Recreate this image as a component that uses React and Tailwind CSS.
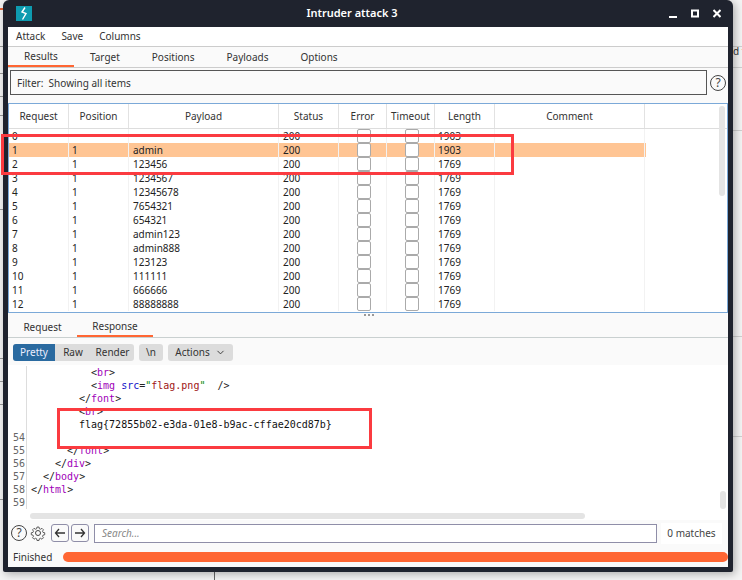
import { ChevronDown } from 'lucide-react';

const mono = "font-['DejaVu_Sans_Mono',monospace] text-[10px] leading-[13px]";

const columns = [
  { name: 'Request', w: 'w-[60px]' },
  { name: 'Position', w: 'w-[60px]' },
  { name: 'Payload', w: 'w-[150px]' },
  { name: 'Status', w: 'w-[60px]' },
  { name: 'Error', w: 'w-[48px]' },
  { name: 'Timeout', w: 'w-[48px]' },
  { name: 'Length', w: 'w-[60px]' },
  { name: 'Comment', w: 'w-[150px]' },
];

const rows = [
  ['0', '', '', '200', '1903'],
  ['1', '1', 'admin', '200', '1903'],
  ['2', '1', '123456', '200', '1769'],
  ['3', '1', '1234567', '200', '1769'],
  ['4', '1', '12345678', '200', '1769'],
  ['5', '1', '7654321', '200', '1769'],
  ['6', '1', '654321', '200', '1769'],
  ['7', '1', 'admin123', '200', '1769'],
  ['8', '1', 'admin888', '200', '1769'],
  ['9', '1', '123123', '200', '1769'],
  ['10', '1', '111111', '200', '1769'],
  ['11', '1', '666666', '200', '1769'],
  ['12', '1', '88888888', '200', '1769'],
];

function Tag({ name }) {
  return <><span className="text-[#222]">&lt;</span><span className="text-[#a000b8]">{name}</span><span className="text-[#222]">&gt;</span></>;
}

function CloseTag({ name }) {
  return <><span className="text-[#222]">&lt;/</span><span className="text-[#a000b8]">{name}</span><span className="text-[#222]">&gt;</span></>;
}

const codeLines = [
  { indent: 'pl-[64px]', body: <Tag name="br" /> },
  {
    indent: 'pl-[64px]',
    body: (
      <>
        <span className="text-[#222]">&lt;</span><span className="text-[#a000b8]">img</span>{' '}
        <span className="text-[#1414c8]">src</span><span className="text-[#222]">=</span>
        <span className="text-[#0a8a0a]">"</span><span className="text-[#a01414]">flag.png</span><span className="text-[#0a8a0a]">"</span>
        <span className="text-[#222]">{'  />'}</span>
      </>
    ),
  },
  { indent: 'pl-[52px]', body: <CloseTag name="font" /> },
  { indent: 'pl-[52px]', body: <Tag name="br" /> },
  { indent: 'pl-[52px]', body: <span className="text-[#111]">{'flag{72855b02-e3da-01e8-b9ac-cffae20cd87b}'}</span> },
  { num: '54', indent: 'pl-[40px]', body: null },
  { num: '55', indent: 'pl-[40px]', body: <CloseTag name="font" /> },
  { num: '56', indent: 'pl-[28px]', body: <CloseTag name="div" /> },
  { num: '57', indent: 'pl-[16px]', body: <CloseTag name="body" /> },
  { num: '58', indent: 'pl-[4px]', body: <CloseTag name="html" /> },
  { num: '59', indent: 'pl-[4px]', body: null },
];

// stray lines of the window behind the attack window
const leftLines = ['top-[46px]', 'top-[73px]', 'top-[96px]', 'top-[115px]', 'top-[209px]', 'top-[358px]', 'top-[381px]', 'top-[404px]', 'top-[499px]'];
const rightLines = ['top-[46px]', 'top-[67px]', 'top-[130px]', 'top-[336px]', 'top-[436px]'];

function HelpIcon() {
  return (
    <div className="flex h-4 w-4 shrink-0 items-center justify-center rounded-full border border-[#444] text-[12px] leading-none text-[#444]">?</div>
  );
}

function Checkbox() {
  return (
    <div className="flex w-[48px] justify-center border-r border-[#f2f2f2] pl-[2px]">
      <div className="h-[14px] w-[14px] rounded-[2px] border border-[#aaa] bg-white" />
    </div>
  );
}

function App() {
  return (
    <div className="relative h-[580px] w-[742px] overflow-hidden bg-[#f4f4f4] font-['Noto_Sans',sans-serif] text-[10px] text-[#333]">
      {/* bits of the window behind */}
      <div className="absolute left-0 top-[8px] h-[2px] w-[3px] bg-[#e8663a]" />
      {leftLines.map((t) => (
        <div key={t} className={`absolute left-0 h-px w-[3px] bg-[#9a9a9a] ${t}`} />
      ))}
      {rightLines.map((t) => (
        <div key={t} className={`absolute left-[733px] h-px w-[9px] bg-[#d0d0d0] ${t}`} />
      ))}
      <div className="absolute left-[214px] top-[572px] h-[8px] w-px bg-[#666]" />
      <div className="absolute left-[733px] top-[44px] whitespace-pre text-[#333]">d t</div>

      {/* attack window */}
      <div className="relative ml-[3px] flex h-[572px] w-[730px] flex-col overflow-hidden rounded-t-[6px] rounded-b-[2px] bg-[#1f232e] px-[5px] pb-[5px] shadow-[2px_2px_8px_rgba(0,0,0,0.3)]">
        <div className="relative flex h-[27px] shrink-0 items-center justify-center pr-[32px]">
          <div className="absolute left-[8px] top-[6px] flex h-[15px] w-[16px] items-center justify-center bg-[#0e9bb0]">
            <svg width="10" height="13" viewBox="0 0 10 13" fill="none" stroke="#fff" strokeWidth="1.4">
              <path d="M6 0.5 L3 5 L7 6.5 L3.5 12.5" />
            </svg>
          </div>
          <span className="text-[11px] font-semibold text-white">Intruder attack 3</span>
          <div className="absolute right-[7px] top-[9px] flex items-center gap-[14px]">
            <svg width="8" height="9" viewBox="0 0 8 9"><rect x="0" y="7" width="8" height="2" fill="#fff" /></svg>
            <svg width="8" height="9" viewBox="0 0 8 9" fill="none" stroke="#fff" strokeWidth="2"><rect x="1" y="1.5" width="6" height="6" /></svg>
            <svg width="8" height="9" viewBox="0 0 8 9" fill="none" stroke="#fff" strokeWidth="2"><path d="M0.5 1 L7.5 8 M7.5 1 L0.5 8" /></svg>
          </div>
        </div>

        <div className="flex min-h-0 flex-1 flex-col bg-[#fafafa]">
          {/* menu bar */}
          <div className="flex h-[20px] shrink-0 items-center gap-[16px] border-b border-[#ccc] bg-white pl-[8px]">
            <span>Attack</span>
            <span>Save</span>
            <span>Columns</span>
          </div>

          {/* tabs */}
          <div className="flex h-[21px] shrink-0 border-b border-[#ccc]">
            <div className="flex w-[66px] items-center justify-center border-b-2 border-[#ff6633] pt-[1px]">Results</div>
            <div className="flex items-center px-[16px]">Target</div>
            <div className="flex items-center px-[16px]">Positions</div>
            <div className="flex items-center px-[16px]">Payloads</div>
            <div className="flex items-center px-[16px]">Options</div>
          </div>

          {/* filter */}
          <div className="flex h-[35px] shrink-0 items-start gap-[3px] pl-[2px] pt-[2px]">
            <div className="flex h-[25px] w-[697px] items-center border border-[#555] pl-[6px] pt-[1px]">
              <span className="whitespace-pre">Filter:  Showing all items</span>
            </div>
            <div className="mt-[5px]"><HelpIcon /></div>
          </div>

          {/* results table */}
          <div className="relative h-[210px] shrink-0 overflow-hidden border border-[#7ba9d8] bg-white text-[#222]">
            <div className="flex h-[25px] border-b border-[#ddd]">
              {columns.map((c) => (
                <div key={c.name} className={`${c.w} flex items-center justify-center border-r border-[#e2e2e2] text-[#333]`}>{c.name}</div>
              ))}
            </div>
            {rows.map((r) => (
              <div key={r[0]} className={`flex h-[14px] w-[637px] items-center ${r[0] === '1' ? 'bg-[#ffc594]' : ''}`}>
                <div className="h-[14px] w-[60px] border-r border-[#f2f2f2] pl-[3px]">{r[0]}</div>
                <div className="h-[14px] w-[60px] border-r border-[#f2f2f2] pl-[3px]">{r[1]}</div>
                <div className="h-[14px] w-[150px] border-r border-[#f2f2f2] pl-[4px]">{r[2]}</div>
                <div className="h-[14px] w-[60px] border-r border-[#f2f2f2] pl-[4px]">{r[3]}</div>
                <Checkbox />
                <Checkbox />
                <div className="h-[14px] w-[60px] border-r border-[#f2f2f2] pl-[3px]">{r[4]}</div>
                <div className="h-[14px] w-[150px] border-r border-[#f2f2f2]" />
              </div>
            ))}
            <div className="absolute right-[2px] top-[2px] h-[90px] w-[6px] rounded-[3px] bg-[#e4e4e4]" />
          </div>

          {/* request / response tabs */}
          <div className="relative flex h-[25px] shrink-0 border-b border-[#c9d0d0]">
            <div className="absolute left-[355px] top-[1px] h-[2px] w-[12px] bg-[radial-gradient(circle,#999_1px,transparent_1px)] bg-[length:4px_2px]" />
            <div className="flex w-[69px] items-center justify-center pt-[5px]">Request</div>
            <div className="flex w-[76px] items-center justify-center border-b-2 border-[#ff6633] pt-[5px]">Response</div>
          </div>

          {/* editor toolbar */}
          <div className="flex h-[27px] shrink-0 items-center gap-[5px] pl-[5px] pt-px">
            <div className="flex h-[17px] overflow-hidden rounded-[3px] bg-[#dcdcdc]">
              <div className="flex w-[42px] items-center justify-center bg-[#2a6aa0] text-[#eef]">Pretty</div>
              <div className="flex w-[36px] items-center justify-center">Raw</div>
              <div className="flex w-[43px] items-center justify-center">Render</div>
            </div>
            <div className="flex h-[17px] w-[24px] items-center justify-center rounded-[3px] bg-[#dcdcdc]">\n</div>
            <div className="flex h-[17px] w-[65px] items-center justify-center gap-[5px] rounded-[3px] bg-[#dcdcdc]">
              Actions <ChevronDown size={11} strokeWidth={2} />
            </div>
          </div>

          {/* response body */}
          <div className="relative h-[155px] shrink-0 overflow-hidden bg-white">
            <div className={`flex flex-col pt-px ${mono}`}>
              {codeLines.map((line, i) => (
                <div key={i} className="flex h-[13px]">
                  <div className="w-[19px] shrink-0 border-r border-[#ddd] pr-[1px] text-right text-[#666]">{line.num}</div>
                  <div className={`whitespace-pre ${line.indent}`}>{line.body}</div>
                </div>
              ))}
            </div>
            <div className="absolute bottom-[1px] left-[22px] h-[6px] w-[555px] rounded-[3px] bg-[#e4e4e4]" />
            <div className="absolute bottom-[11px] right-[2px] h-[18px] w-[6px] rounded-[3px] bg-[#e4e4e4]" />
          </div>

          {/* search row */}
          <div className="flex h-[27px] shrink-0 items-center pb-[1px] pl-[3px]">
            <HelpIcon />
            <svg className="ml-[3px]" width="16" height="16" viewBox="0 0 16 16" fill="none" stroke="#444" strokeWidth="1">
              <circle cx="8" cy="8" r="2.5" />
              <path d="M6.8 1 h2.4 l0.4 2 1.4 0.6 1.7-1.1 1.7 1.7-1.1 1.7 0.6 1.4 2 0.4 v2.4 l-2 0.4-0.6 1.4 1.1 1.7-1.7 1.7-1.7-1.1-1.4 0.6-0.4 2 h-2.4 l-0.4-2-1.4-0.6-1.7 1.1-1.7-1.7 1.1-1.7-0.6-1.4-2-0.4 v-2.4 l2-0.4 0.6-1.4-1.1-1.7 1.7-1.7 1.7 1.1 1.4-0.6 z" transform="translate(1.2 1.2) scale(0.85)" />
            </svg>
            <div className="ml-[5px] flex h-[18px] w-[18px] items-center justify-center rounded-[3px] border border-[#8f8ea8]">
              <svg width="12" height="10" viewBox="0 0 12 10" fill="none" stroke="#333" strokeWidth="1.3"><path d="M11 5 H1.5 M5 1 L1.5 5 L5 9" /></svg>
            </div>
            <div className="ml-[2px] flex h-[18px] w-[18px] items-center justify-center rounded-[3px] border border-[#8f8ea8]">
              <svg width="12" height="10" viewBox="0 0 12 10" fill="none" stroke="#333" strokeWidth="1.3"><path d="M1 5 H10.5 M7 1 L10.5 5 L7 9" /></svg>
            </div>
            <div className="ml-[5px] flex h-[19px] w-[563px] items-center border border-[#8f8ea8] bg-white pl-[7px] italic text-[#888]">Search...</div>
            <div className="ml-[4px] flex h-[21px] w-[61px] items-center justify-center bg-white text-[#444]">0 matches</div>
          </div>

          {/* status bar */}
          <div className="flex min-h-0 flex-1 items-center pl-[5px]">
            <span className="w-[50px] shrink-0">Finished</span>
            <div className="h-[10px] flex-1 rounded-full bg-[#ff6633]" />
          </div>
        </div>
      </div>

      {/* red annotation boxes drawn over the screenshot */}
      <div className="absolute left-[1px] top-[134px] h-[41px] w-[513px] border-[3px] border-[#fb3b40]" />
      <div className="absolute left-[57px] top-[408px] h-[41px] w-[315px] border-[3px] border-[#fb3b40]" />
    </div>
  );
}

export default App;
